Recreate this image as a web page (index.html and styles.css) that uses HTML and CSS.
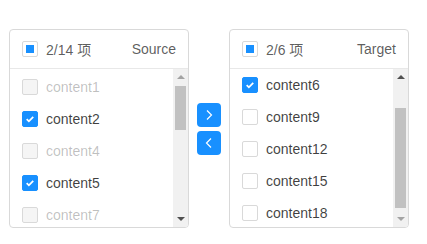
FILE: index.html
```html
<!DOCTYPE html>
<html>
<head>
<meta charset="utf-8">
<link rel="stylesheet" href="styles.css">
</head>
<body>
<div class="transfer">
  <div class="panel">
    <div class="head">
      <span class="cb ind"></span>
      <span class="count">2/14 项</span>
      <span class="title">Source</span>
    </div>
    <div class="body">
      <ul class="items items-top">
        <li class="item disabled"><span class="cb"></span><span>content1</span></li>
        <li class="item"><span class="cb on"><svg viewBox="0 0 16 16"><path d="M4.2 8.2l2.5 2.5 5-5.2"/></svg></span><span>content2</span></li>
        <li class="item disabled"><span class="cb"></span><span>content4</span></li>
        <li class="item"><span class="cb on"><svg viewBox="0 0 16 16"><path d="M4.2 8.2l2.5 2.5 5-5.2"/></svg></span><span>content5</span></li>
        <li class="item disabled"><span class="cb"></span><span>content7</span></li>
      </ul>
      <div class="sb">
        <div class="sb-btn"><span class="up light"></span></div>
        <div class="sb-track"><div class="thumb thumb-top"></div></div>
        <div class="sb-btn"><span class="down"></span></div>
      </div>
    </div>
  </div>

  <div class="ops">
    <button class="op"><svg viewBox="0 0 24 24"><path d="M10 7.5l4.5 4.5-4.5 4.5"/></svg></button>
    <button class="op"><svg viewBox="0 0 24 24"><path d="M14 7.5l-4.5 4.5 4.5 4.5"/></svg></button>
  </div>

  <div class="panel">
    <div class="head">
      <span class="cb ind"></span>
      <span class="count">2/6 项</span>
      <span class="title">Target</span>
    </div>
    <div class="body">
      <ul class="items">
        <li class="item"><span class="cb on"><svg viewBox="0 0 16 16"><path d="M4.2 8.2l2.5 2.5 5-5.2"/></svg></span><span>content6</span></li>
        <li class="item"><span class="cb"></span><span>content9</span></li>
        <li class="item"><span class="cb"></span><span>content12</span></li>
        <li class="item"><span class="cb"></span><span>content15</span></li>
        <li class="item"><span class="cb"></span><span>content18</span></li>
      </ul>
      <div class="sb">
        <div class="sb-btn"><span class="up"></span></div>
        <div class="sb-track"><div class="thumb thumb-bottom"></div></div>
        <div class="sb-btn"><span class="down light"></span></div>
      </div>
    </div>
  </div>
</div>
</body>
</html>
```

FILE: styles.css
```css
html, body {
  margin: 0;
  padding: 0;
  background: #fff;
}
body {
  font-family: "Liberation Sans", "Noto Sans CJK SC", sans-serif;
  font-size: 14px;
  color: rgba(0, 0, 0, 0.8);
}
.transfer {
  display: flex;
  align-items: center;
  padding: 29px 0 0 9px;
}
.panel {
  width: 180px;
  height: 199px;
  box-sizing: border-box;
  border: 1px solid #d9d9d9;
  border-radius: 4px;
  display: flex;
  flex-direction: column;
  overflow: hidden;
}
.head {
  height: 39px;
  flex: none;
  box-sizing: border-box;
  border-bottom: 1px solid #e8e8e8;
  display: flex;
  align-items: center;
  padding: 0 12px;
  color: rgba(0, 0, 0, 0.65);
}
.count {
  margin-left: 8px;
  flex: 1;
}
.title {
  color: rgba(0, 0, 0, 0.65);
}
.body {
  flex: 1;
  min-height: 0;
  display: flex;
}
.items {
  flex: 1;
  margin: 0;
  padding: 0;
  list-style: none;
  overflow: hidden;
}
.items-top {
  padding-top: 2px;
}
.item {
  height: 32px;
  display: flex;
  align-items: center;
  padding: 0 12px;
  gap: 8px;
  color: rgba(0, 0, 0, 0.75);
}
.item.disabled {
  color: rgba(0, 0, 0, 0.25);
}
.cb {
  width: 16px;
  height: 16px;
  box-sizing: border-box;
  border: 1px solid #d9d9d9;
  border-radius: 2px;
  background: #fff;
  display: flex;
  align-items: center;
  justify-content: center;
  flex: none;
}
.disabled .cb {
  background: #f5f5f5;
}
.cb.on {
  background: #1890ff;
  border-color: #1890ff;
}
.cb svg {
  width: 16px;
  height: 16px;
}
.cb svg path {
  fill: none;
  stroke: #fff;
  stroke-width: 2;
}
.cb.ind::after {
  content: "";
  width: 8px;
  height: 8px;
  background: #1890ff;
}
.sb {
  width: 15px;
  flex: none;
  background: #f1f1f1;
  display: flex;
  flex-direction: column;
}
.sb-btn {
  height: 16px;
  flex: none;
  display: flex;
  align-items: center;
  justify-content: center;
}
.up, .down {
  width: 0;
  height: 0;
  border-left: 4px solid transparent;
  border-right: 4px solid transparent;
}
.up {
  border-bottom: 4px solid #505050;
}
.down {
  border-top: 4px solid #505050;
}
.up.light {
  border-bottom-color: #a3a3a3;
}
.down.light {
  border-top-color: #a3a3a3;
}
.sb-track {
  flex: 1;
  display: flex;
  flex-direction: column;
}
.thumb {
  margin: 0 2px;
  background: #c1c1c1;
}
.thumb-top {
  margin-top: 1px;
  height: 44px;
}
.thumb-bottom {
  margin-top: 23px;
  height: 100px;
}
.ops {
  display: flex;
  flex-direction: column;
  gap: 4px;
  margin: 0 8px;
}
.op {
  width: 24px;
  height: 24px;
  padding: 0;
  border: none;
  border-radius: 4px;
  background: #1890ff;
  display: flex;
  align-items: center;
  justify-content: center;
}
.op svg {
  width: 24px;
  height: 24px;
}
.op svg path {
  fill: none;
  stroke: #fff;
  stroke-width: 1.2;
}
```
